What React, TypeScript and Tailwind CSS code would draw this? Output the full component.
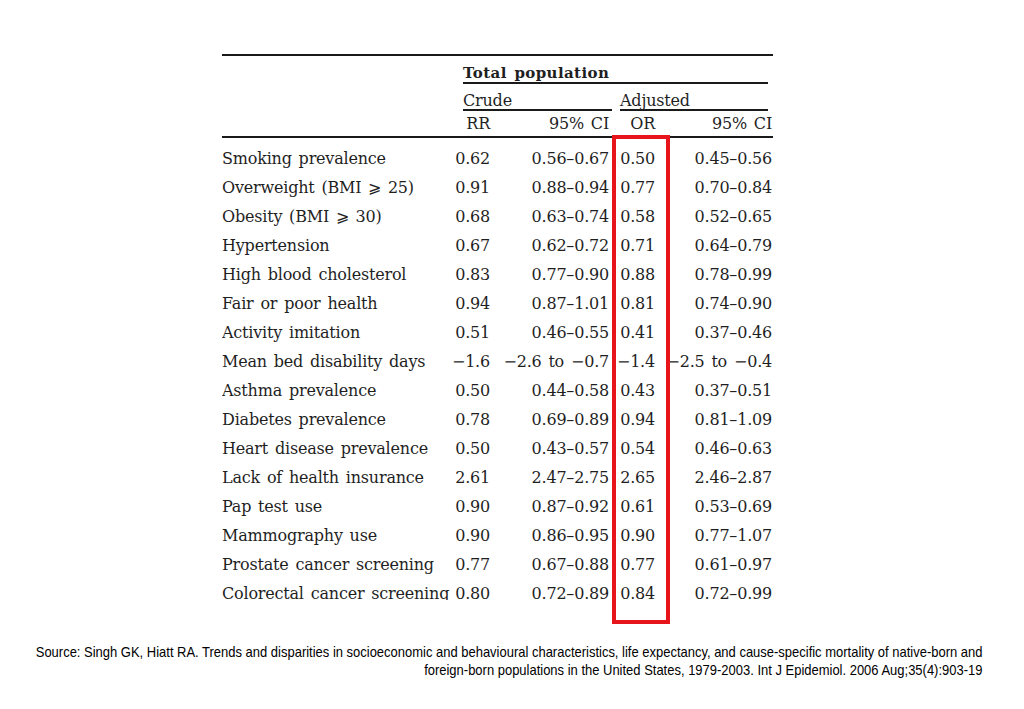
import React from 'react';

type Row = { label: string; rr: string; rrCi: string; or: string; orCi: string };

const rows: Row[] = [
  { label: 'Smoking prevalence', rr: '0.62', rrCi: '0.56–0.67', or: '0.50', orCi: '0.45–0.56' },
  { label: 'Overweight (BMI ⩾ 25)', rr: '0.91', rrCi: '0.88–0.94', or: '0.77', orCi: '0.70–0.84' },
  { label: 'Obesity (BMI ⩾ 30)', rr: '0.68', rrCi: '0.63–0.74', or: '0.58', orCi: '0.52–0.65' },
  { label: 'Hypertension', rr: '0.67', rrCi: '0.62–0.72', or: '0.71', orCi: '0.64–0.79' },
  { label: 'High blood cholesterol', rr: '0.83', rrCi: '0.77–0.90', or: '0.88', orCi: '0.78–0.99' },
  { label: 'Fair or poor health', rr: '0.94', rrCi: '0.87–1.01', or: '0.81', orCi: '0.74–0.90' },
  { label: 'Activity imitation', rr: '0.51', rrCi: '0.46–0.55', or: '0.41', orCi: '0.37–0.46' },
  { label: 'Mean bed disability days', rr: '−1.6', rrCi: '−2.6 to −0.7', or: '−1.4', orCi: '−2.5 to −0.4' },
  { label: 'Asthma prevalence', rr: '0.50', rrCi: '0.44–0.58', or: '0.43', orCi: '0.37–0.51' },
  { label: 'Diabetes prevalence', rr: '0.78', rrCi: '0.69–0.89', or: '0.94', orCi: '0.81–1.09' },
  { label: 'Heart disease prevalence', rr: '0.50', rrCi: '0.43–0.57', or: '0.54', orCi: '0.46–0.63' },
  { label: 'Lack of health insurance', rr: '2.61', rrCi: '2.47–2.75', or: '2.65', orCi: '2.46–2.87' },
  { label: 'Pap test use', rr: '0.90', rrCi: '0.87–0.92', or: '0.61', orCi: '0.53–0.69' },
  { label: 'Mammography use', rr: '0.90', rrCi: '0.86–0.95', or: '0.90', orCi: '0.77–1.07' },
  { label: 'Prostate cancer screening', rr: '0.77', rrCi: '0.67–0.88', or: '0.77', orCi: '0.61–0.97' },
  { label: 'Colorectal cancer screening', rr: '0.80', rrCi: '0.72–0.89', or: '0.84', orCi: '0.72–0.99' },
];

const cols = 'grid grid-cols-[214px_54px_119px_46px_117px]';

export default function App() {
  return (
    <div className="relative w-[1024px] h-[709px] bg-white overflow-hidden">
      <div
        className="ml-[222px] pt-[54px] w-[551px] text-[#1f1f1f] text-[16px] tracking-[-0.2px] [word-spacing:2px]"
        style={{ fontFamily: '"DejaVu Serif", serif' }}
      >
        <div className="h-[2px] bg-[#1a1a1a]" />

        <div className="pl-[241px] w-[546px]">
          <div className="pt-[7px] h-[28px] font-bold text-[15px] tracking-[0.4px] leading-[20px] border-b-2 border-[#1a1a1a]">
            Total population
          </div>
          <div className="flex gap-[8px]">
            <div className="w-[149px] pt-[8px] h-[27px] leading-[18px] border-b-2 border-[#1a1a1a]">Crude</div>
            <div className="w-[148px] pt-[8px] h-[27px] leading-[18px] border-b-2 border-[#1a1a1a]">Adjusted</div>
          </div>
        </div>

        <div className={`${cols} h-[25px] items-center leading-[18px]`}>
          <div />
          <div className="text-right">RR</div>
          <div className="text-right">95% CI</div>
          <div className="text-right">OR</div>
          <div className="text-right">95% CI</div>
        </div>
        <div className="h-[2px] bg-[#1a1a1a]" />

        <div className="h-[462px] pt-[6px] overflow-hidden">
          {rows.map((r) => (
            <div key={r.label} className={`${cols} h-[29px] items-center whitespace-nowrap`}>
              <div>{r.label}</div>
              <div className="text-right">{r.rr}</div>
              <div className="text-right">{r.rrCi}</div>
              <div className="text-right">{r.or}</div>
              <div className="text-right">{r.orCi}</div>
            </div>
          ))}
        </div>
      </div>

      <div className="absolute left-[612px] top-[135px] w-[58px] h-[489px] border-[4px] border-[#e8141b]" />

      <div
        className="mt-[43px] pr-[42px] flex flex-col items-end text-[15px] leading-[18px] text-black whitespace-nowrap"
        style={{ fontFamily: '"Liberation Sans", Arial, sans-serif' }}
      >
        <p className="origin-right scale-x-[0.865]">
          Source: Singh GK, Hiatt RA. Trends and disparities in socioeconomic and behavioural characteristics, life
          expectancy, and cause-specific mortality of native-born and
        </p>
        <p className="origin-right scale-x-[0.865]">
          foreign-born populations in the United States, 1979-2003. Int J Epidemiol. 2006 Aug;35(4):903-19
        </p>
      </div>
    </div>
  );
}
